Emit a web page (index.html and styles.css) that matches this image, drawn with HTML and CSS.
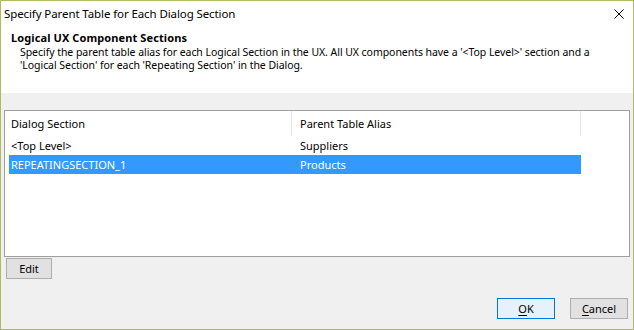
FILE: index.html
```html
<!DOCTYPE html>
<html>
<head>
<meta charset="utf-8">
<link rel="stylesheet" href="styles.css">
</head>
<body>
<div class="window">
  <div class="top">
    <div class="titlebar">
      <span class="title">Specify Parent Table for Each Dialog Section</span>
      <svg class="close" width="10" height="10" viewBox="0 0 10 10"><path d="M0.5 0.5 L9.5 9.5 M9.5 0.5 L0.5 9.5" stroke="#000" stroke-width="1" fill="none"/></svg>
    </div>
    <div class="panel">
      <div class="heading">Logical UX Component Sections</div>
      <div class="desc">Specify the parent table alias for each Logical Section in the UX. All UX components have a '&lt;Top Level&gt;' section and a<br>'Logical Section' for each 'Repeating Section' in the Dialog.</div>
    </div>
  </div>
  <div class="body">
    <div class="list">
      <div class="head">
        <div class="hcell c1">Dialog Section</div>
        <div class="hcell c2">Parent Table Alias</div>
        <div class="hcell c3"></div>
      </div>
      <div class="rows">
        <div class="row"><div class="cell r1">&lt;Top Level&gt;</div><div class="cell r2">Suppliers</div></div>
        <div class="row sel"><div class="cell r1">REPEATINGSECTION_1</div><div class="cell r2">Products</div></div>
      </div>
    </div>
    <div class="editbar"><button class="btn edit">Edit</button></div>
    <div class="footer">
      <button class="btn ok"><u>O</u>K</button>
      <button class="btn cancel"><u>C</u>ancel</button>
    </div>
  </div>
</div>
</body>
</html>
```
FILE: styles.css
```css
* { box-sizing: border-box; }
html, body { margin: 0; padding: 0; }
body { font-family: "Noto Sans", "Open Sans", sans-serif; color: #000; }
.window {
  width: 634px; height: 330px;
  border: 1px solid #b0bb5e;
  background: #f0f0f0;
  display: flex; flex-direction: column;
}
.top { background: #fff; height: 92px; }
.titlebar {
  height: 25px; display: flex; align-items: center; justify-content: space-between;
  padding-left: 3px; padding-right: 9px;
}
.title { font-size: 11.5px; letter-spacing: -0.1px; }
.close { display: block; margin-top: 1px; }
.panel { padding-top: 4px; }
.heading { font-size: 11px; font-weight: bold; line-height: 15px; padding-left: 10px; letter-spacing: 0.1px; }
.desc { font-size: 10.5px; letter-spacing: -0.05px; line-height: 13px; padding-left: 19px; margin-top: 1px; }
.body { flex: 1; display: flex; flex-direction: column; padding: 17px 3px 0 3px; }
.list {
  height: 147px; border: 1px solid #a0a0a0; background: #fff;
  font-size: 11px;
}
.head { display: flex; height: 25px; }
.hcell { display: flex; align-items: center; height: 100%; }
.hcell.c1 { width: 287px; padding-left: 6px; border-right: 1px solid #e5e5e5; }
.hcell.c2 { width: 289px; padding-left: 8px; border-right: 1px solid #e5e5e5; }
.rows { padding-left: 4px; }
.row { display: flex; width: 572px; height: 19px; align-items: center; }
.row.sel { background: #3399ff; color: #fff; }
.cell.r1 { width: 283px; padding-left: 2px; }
.cell.r2 { padding-left: 8px; }
.btn {
  font-family: inherit; font-size: 11px; color: #000;
  height: 21px; border: 1px solid #adadad; background: #e1e1e1;
  padding: 0; margin: 0;
}
.editbar { padding-top: 1px; padding-left: 2px; }
.edit { width: 46px; display: block; }
.footer { margin-top: auto; display: flex; justify-content: flex-end; gap: 15px; padding-right: 2px; padding-bottom: 10px; }
.ok, .cancel { width: 58px; }
.ok { border-color: #0078d7; background: #e5f1fb; }
u { text-underline-offset: 2px; }
```
